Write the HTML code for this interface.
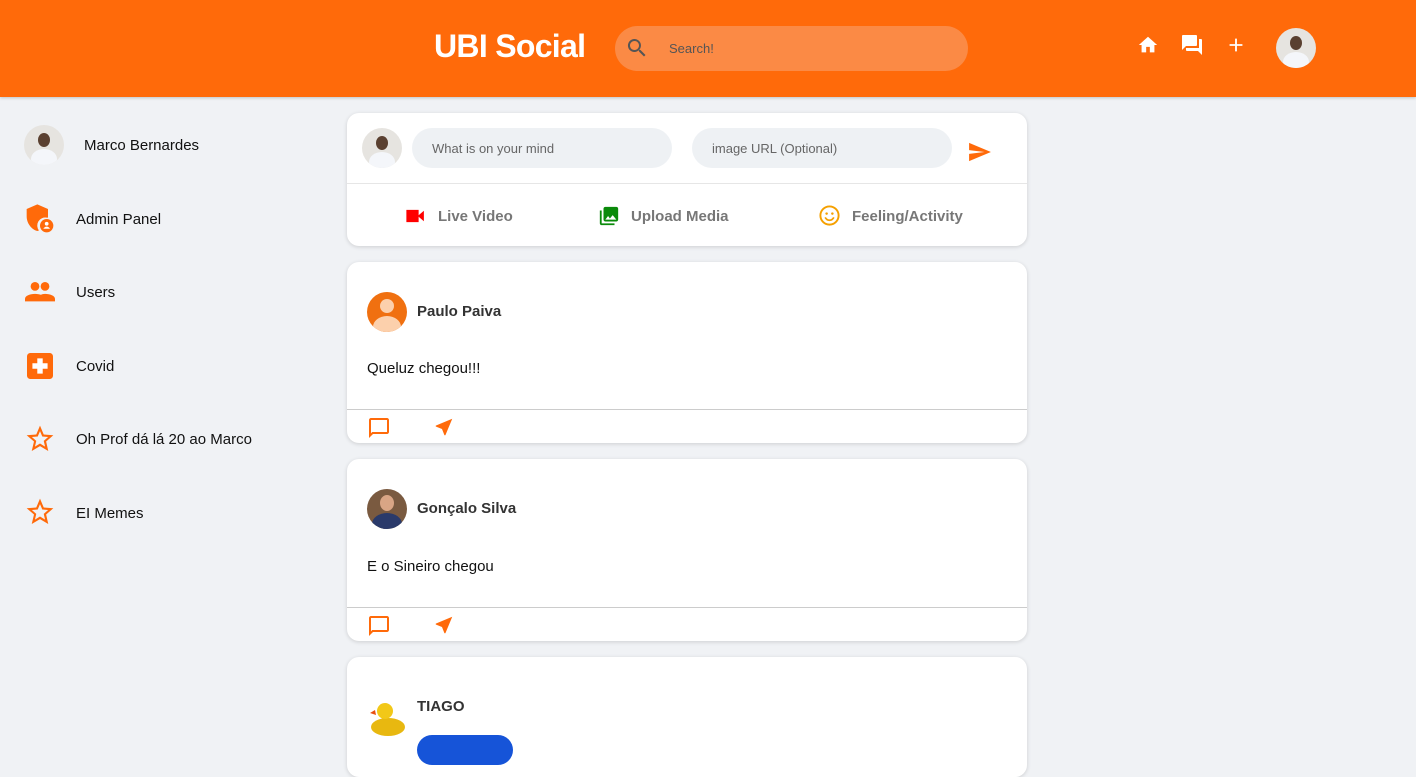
<!DOCTYPE html>
<html><head><meta charset="utf-8"><style>
*{box-sizing:border-box;margin:0;padding:0}
body{width:1416px;height:745px;overflow:hidden;background:#f0f2f5;font-family:"Liberation Sans",sans-serif;position:relative}
.hdr{position:absolute;left:0;top:0;width:1416px;height:97px;background:#ff6a0a;box-shadow:0 1px 3px rgba(0,0,0,.2)}
.logo{position:absolute;left:434px;top:28px;color:#fff;font-weight:bold;font-size:32px;letter-spacing:-0.7px}
.search{position:absolute;left:615px;top:26px;width:353px;height:45px;border-radius:23px;background:#fb8a45}
.search span{position:absolute;left:54px;top:15px;font-size:13px;color:#555}
.av{border-radius:50%;overflow:hidden;position:absolute;background:#ddd}
.si{position:absolute;left:76px;font-size:15px;color:#111}
.card{position:absolute;left:347px;width:680px;background:#fff;border-radius:12px;box-shadow:0 1px 4px rgba(0,0,0,.15)}
.inp{position:absolute;top:15px;height:40px;border-radius:20px;background:#eef1f4;font-size:13px;color:#666;padding:13px 20px}
.act{position:absolute;top:95px;font-size:15px;font-weight:bold;color:#777}
.nm{position:absolute;left:70px;font-size:15px;font-weight:bold;color:#333}
.tx{position:absolute;left:20px;font-size:15px;color:#111}
.ln{position:absolute;left:0;right:0;border-top:1px solid #ccc}
</style></head><body>
<div class="hdr">
<div class="logo">UBI Social</div>
<div class="search"><svg style="position:absolute;left:10px;top:10px" width="24" height="24" viewBox="0 0 24 24"><path fill="#555" d="M15.5 14h-.8l-.3-.3A6.5 6.5 0 1 0 9.5 16a6.5 6.5 0 0 0 4.2-1.6l.3.3v.8l5 5 1.5-1.5-5-5zm-6 0C7 14 5 12 5 9.5S7 5 9.5 5 14 7 14 9.5 12 14 9.5 14z"/></svg><span>Search!</span></div>
<svg style="position:absolute;left:1137px;top:34px" width="22" height="22" viewBox="0 0 24 24"><path fill="#fff" d="M10 20v-6h4v6h5v-8h3L12 3 2 12h3v8z"/></svg>
<svg style="position:absolute;left:1180px;top:33px" width="24" height="24" viewBox="0 0 24 24"><path fill="#fff" d="M21 6h-2v9H6v2c0 .6.4 1 1 1h11l4 4V7c0-.6-.4-1-1-1zm-4 6V3c0-.6-.4-1-1-1H3c-.6 0-1 .4-1 1v14l4-4h10c.6 0 1-.4 1-1z"/></svg>
<svg style="position:absolute;left:1225px;top:34px" width="22" height="22" viewBox="0 0 24 24"><path fill="#fff" d="M19 13h-6v6h-2v-6H5v-2h6V5h2v6h6z"/></svg>
<div class="av" style="left:1276px;top:28px;width:40px;height:40px;background:#e6e4e0"><div style="position:absolute;left:14px;top:8px;width:12px;height:14px;border-radius:50%;background:#5a4030"></div><div style="position:absolute;left:7px;top:24px;width:26px;height:20px;border-radius:50%;background:#f4f6fa"></div></div>
</div>

<div class="av" style="left:24px;top:125px;width:40px;height:40px;background:#e6e4e0"><div style="position:absolute;left:14px;top:8px;width:12px;height:14px;border-radius:50%;background:#5a4030"></div><div style="position:absolute;left:7px;top:24px;width:26px;height:20px;border-radius:50%;background:#f4f6fa"></div></div>
<div class="si" style="left:84px;top:137px">Marco Bernardes</div>
<svg style="position:absolute;left:24px;top:203px" width="32" height="32" viewBox="0 0 24 24"><path fill="#ff6a0a" d="M10 1L2 4.5v5.5c0 5 3.4 9.7 8 11 .4-.1.8-.3 1.2-.4A6 6 0 0 1 17 11h1V4.5z"/><circle cx="17" cy="17" r="5" fill="#ff6a0a"/><circle cx="17" cy="15.6" r="1.4" fill="#fff"/><path fill="#fff" d="M14.5 19.3c.5-1 1.5-1.6 2.5-1.6s2 .6 2.5 1.6z"/></svg>
<div class="si" style="top:211px">Admin Panel</div>
<svg style="position:absolute;left:25px;top:280px" width="30" height="24" viewBox="0 0 24 19"><circle cx="8" cy="5" r="3.5" fill="#ff6a0a"/><circle cx="16" cy="5" r="3.5" fill="#ff6a0a"/><path fill="#ff6a0a" d="M0 17v-2c0-2.5 4-4 8-4s8 1.5 8 4v2zM14 17v-2c0-1.3-.6-2.3-1.5-3.2 1-.5 2.3-.8 3.5-.8 4 0 8 1.5 8 4v2z"/></svg>
<div class="si" style="top:284px">Users</div>
<svg style="position:absolute;left:27px;top:353px" width="26" height="26" viewBox="0 0 24 24"><rect width="24" height="24" rx="3" fill="#ff6a0a"/><path fill="#fff" d="M9.5 5h5v4.5H19v5h-4.5V19h-5v-4.5H5v-5h4.5z"/></svg>
<div class="si" style="top:358px">Covid</div>
<svg style="position:absolute;left:24px;top:423px" width="32" height="32" viewBox="0 0 24 24"><path fill="#ff6a0a" d="M22 9.2l-7.2-.6L12 2 9.2 8.6 2 9.2l5.5 4.7L5.8 21 12 17.3 18.2 21l-1.6-7.1zM12 15.4l-3.8 2.3 1-4.3-3.3-2.9 4.4-.4L12 6.1l1.7 4 4.4.4-3.3 2.9 1 4.3z"/></svg>
<div class="si" style="top:431px">Oh Prof dá lá 20 ao Marco</div>
<svg style="position:absolute;left:24px;top:496px" width="32" height="32" viewBox="0 0 24 24"><path fill="#ff6a0a" d="M22 9.2l-7.2-.6L12 2 9.2 8.6 2 9.2l5.5 4.7L5.8 21 12 17.3 18.2 21l-1.6-7.1zM12 15.4l-3.8 2.3 1-4.3-3.3-2.9 4.4-.4L12 6.1l1.7 4 4.4.4-3.3 2.9 1 4.3z"/></svg>
<div class="si" style="top:505px">EI Memes</div>

<div class="card" style="top:113px;height:133px">
<div class="av" style="left:15px;top:15px;width:40px;height:40px;background:#e6e4e0"><div style="position:absolute;left:14px;top:8px;width:12px;height:14px;border-radius:50%;background:#5a4030"></div><div style="position:absolute;left:7px;top:24px;width:26px;height:20px;border-radius:50%;background:#f4f6fa"></div></div>
<div class="inp" style="left:65px;width:260px">What is on your mind</div>
<div class="inp" style="left:345px;width:260px">image URL (Optional)</div>
<svg style="position:absolute;left:622px;top:29px" width="22" height="20" viewBox="0 0 24 22"><path fill="#ff6a0a" d="M0 21l24-10L0 1v8l17 2-17 2z"/></svg>
<div class="ln" style="top:70px;border-color:#e6e6e6"></div>
<svg style="position:absolute;left:59px;top:96px" width="20" height="14" viewBox="0 0 22 16"><rect x="0" y="1" width="14" height="14" fill="#f00"/><path fill="#f00" d="M13 8l7-6v12z"/></svg>
<div class="act" style="left:91px">Live Video</div>
<svg style="position:absolute;left:251px;top:92px" width="22" height="22" viewBox="0 0 24 24"><path fill="#0a8a0a" d="M22 16V4c0-1.1-.9-2-2-2H8c-1.1 0-2 .9-2 2v12c0 1.1.9 2 2 2h12c1.1 0 2-.9 2-2zm-11-4l2 2.7L16 11l4 5H8zM2 6v14c0 1.1.9 2 2 2h14v-2H4V6z"/></svg>
<div class="act" style="left:284px">Upload Media</div>
<svg style="position:absolute;left:471px;top:91px" width="23" height="23" viewBox="0 0 24 24"><circle cx="12" cy="12" r="9.5" fill="none" stroke="#f5a000" stroke-width="2"/><circle cx="9" cy="10" r="1.3" fill="#f5a000"/><circle cx="15" cy="10" r="1.3" fill="#f5a000"/><path d="M7.5 14c1 2 2.5 3 4.5 3s3.5-1 4.5-3" fill="none" stroke="#f5a000" stroke-width="1.8"/></svg>
<div class="act" style="left:505px">Feeling/Activity</div>
</div>

<div class="card" style="top:262px;height:181px">
<div class="av" style="left:20px;top:30px;width:40px;height:40px;background:#f07010"><div style="position:absolute;left:13px;top:7px;width:14px;height:14px;border-radius:50%;background:#fcd0ac"></div><div style="position:absolute;left:6px;top:24px;width:28px;height:22px;border-radius:50%;background:#fcd0ac"></div></div>
<div class="nm" style="top:41px">Paulo Paiva</div>
<div class="tx" style="top:98px">Queluz chegou!!!</div>
<div class="ln" style="top:147px"></div>
<svg style="position:absolute;left:20px;top:154px" width="24" height="24" viewBox="0 0 24 24"><path fill="#ff6a0a" d="M20 2H4c-1.1 0-2 .9-2 2v18l4-4h14c1.1 0 2-.9 2-2V4c0-1.1-.9-2-2-2zm0 14H5.2L4 17.2V4h16z"/></svg>
<svg style="position:absolute;left:86px;top:154px" width="22" height="22" viewBox="0 0 24 24"><path fill="#ff6a0a" d="M21 3L3 10.5v1l6.8 2.7L12.5 21h1z"/></svg>
</div>

<div class="card" style="top:459px;height:182px">
<div class="av" style="left:20px;top:30px;width:40px;height:40px;background:#7a5a40"><div style="position:absolute;left:13px;top:6px;width:14px;height:16px;border-radius:50%;background:#d9a585"></div><div style="position:absolute;left:5px;top:24px;width:30px;height:22px;border-radius:50%;background:#2a3a6a"></div></div>
<div class="nm" style="top:41px">Gonçalo Silva</div>
<div class="tx" style="top:99px">E o Sineiro chegou</div>
<div class="ln" style="top:148px"></div>
<svg style="position:absolute;left:20px;top:155px" width="24" height="24" viewBox="0 0 24 24"><path fill="#ff6a0a" d="M20 2H4c-1.1 0-2 .9-2 2v18l4-4h14c1.1 0 2-.9 2-2V4c0-1.1-.9-2-2-2zm0 14H5.2L4 17.2V4h16z"/></svg>
<svg style="position:absolute;left:86px;top:155px" width="22" height="22" viewBox="0 0 24 24"><path fill="#ff6a0a" d="M21 3L3 10.5v1l6.8 2.7L12.5 21h1z"/></svg>
</div>

<div class="card" style="top:657px;height:120px">
<svg style="position:absolute;left:22px;top:40px" width="38" height="40" viewBox="0 0 38 40"><ellipse cx="19" cy="30" rx="17" ry="9" fill="#e8b810"/><circle cx="16" cy="14" r="8" fill="#f2c818"/><path d="M6 13l-5 3 6 2z" fill="#e85010"/></svg>
<div class="nm" style="top:41px">TIAGO</div>
<div style="position:absolute;left:70px;top:78px;width:96px;height:30px;border-radius:15px;background:#1654d8"></div>
</div>
</body></html>
